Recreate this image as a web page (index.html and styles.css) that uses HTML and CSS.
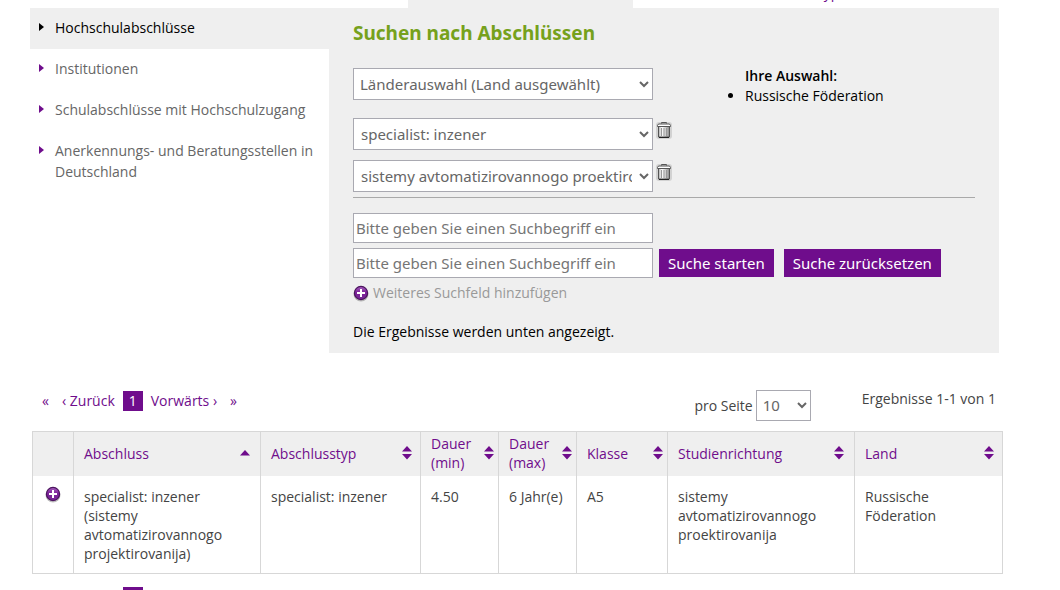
FILE: index.html
```html
<!DOCTYPE html>
<html lang="de">
<head>
<meta charset="utf-8">
<title>Suchen nach Abschlüssen</title>
<link rel="stylesheet" href="styles.css">
</head>
<body>
<svg class="defs" aria-hidden="true">
  <defs>
    <linearGradient id="violet" x1="0" y1="0" x2="0" y2="1"><stop offset="0" stop-color="#a560bd"/><stop offset=".45" stop-color="#7c2299"/><stop offset="1" stop-color="#762895"/></linearGradient>
    <linearGradient id="metal"><stop offset="0" stop-color="#aaa"/><stop offset=".3" stop-color="#fff"/><stop offset=".65" stop-color="#ccc"/><stop offset="1" stop-color="#888"/></linearGradient>
  </defs>
  <symbol id="plus" viewBox="0 0 16 17">
    <ellipse cx="8" cy="9" rx="7.5" ry="7.5" fill="#000" opacity=".25"/>
    <circle cx="8" cy="8" r="6.6" fill="url(#violet)" stroke="#4c145f" stroke-width="1.2"/>
    <path d="M8 4v8M4 8h8" stroke="#fff" stroke-width="2"/>
  </symbol>
  <symbol id="trash" viewBox="0 0 16 20">
    <rect x="0" y="2" width="16" height="17" rx="3" fill="#000" opacity=".12"/>
    <path d="M5.500 3.500V2.500h5v1" fill="none" stroke="#555"/>
    <path d="M2.500 6.500h11v10.500h-11z" fill="url(#metal)" stroke="#555"/>
    <path d="M5.500 8v8M8 8v8M10.500 8v8" stroke="#999"/>
    <path d="M3 17.500h10" stroke="#222"/>
    <path d="M1.500 6.500v-1l1-1.500h11l1 1.500v1z" fill="#fff" stroke="#555"/>
  </symbol>
  <symbol id="sort" viewBox="0 0 10 14">
    <path d="M0 5.500L5 0l5 5.500zM0 8h10L5 13.500z" fill="#6f0d8c"/>
  </symbol>
  <symbol id="sort-up" viewBox="0 0 10 14">
    <path d="M0 9.500L5 4l5 5.500z" fill="#6f0d8c"/>
  </symbol>
</svg>
<header class="tabs">
  <span class="tab-active"></span>
  <a class="tab" href="#">Abschlusstypen</a>
</header>
<main class="page">
  <div class="top">
    <nav class="side">
      <a class="side-link active" href="#">Hochschulabschlüsse</a>
      <a class="side-link" href="#">Institutionen</a>
      <a class="side-link" href="#">Schulabschlüsse mit Hochschulzugang</a>
      <a class="side-link" href="#">Anerkennungs- und Beratungsstellen in Deutschland</a>
    </nav>
    <form class="panel">
      <h1 class="title">Suchen nach Abschlüssen</h1>
      <div class="choice">
        <select class="field select country" aria-label="Länderauswahl"><option>Länderauswahl (Land ausgewählt)</option></select>
        <div class="selection">
          <strong>Ihre Auswahl:</strong>
          <ul class="countries"><li>Russische Föderation</li></ul>
        </div>
      </div>
      <div class="filters">
        <div class="line">
          <select class="field select" aria-label="Abschluss"><option>specialist: inzener</option></select>
          <button class="icon-button" type="button" aria-label="Abschluss entfernen"><svg class="trash"><use href="#trash"/></svg></button>
        </div>
        <div class="line">
          <select class="field select" aria-label="Studienrichtung"><option>sistemy avtomatizirovannogo proektirovanija</option></select>
          <button class="icon-button" type="button" aria-label="Studienrichtung entfernen"><svg class="trash"><use href="#trash"/></svg></button>
        </div>
      </div>
      <div class="terms">
        <input class="field text" type="text" aria-label="Suchbegriff 1" placeholder="Bitte geben Sie einen Suchbegriff ein">
        <div class="actions">
          <input class="field text" type="text" aria-label="Suchbegriff 2" placeholder="Bitte geben Sie einen Suchbegriff ein">
          <button class="button" type="button">Suche starten</button>
          <button class="button" type="button">Suche zurücksetzen</button>
        </div>
      </div>
      <a class="more" href="#"><svg class="plus"><use href="#plus"/></svg>Weiteres Suchfeld hinzufügen</a>
      <p class="note">Die Ergebnisse werden unten angezeigt.</p>
    </form>
  </div>
  <section class="results">
    <div class="bar">
      <nav class="pager">
        <a class="first" href="#">«</a><a class="back" href="#">‹ Zurück</a><a class="current" href="#">1</a><a class="next" href="#">Vorwärts ›</a><a class="last" href="#">»</a>
      </nav>
      <label class="per-page">pro Seite <select class="field count"><option>10</option></select></label>
      <span class="total">Ergebnisse 1-1 von 1</span>
    </div>
    <table class="table">
      <colgroup><col class="c-icon"><col class="c-wide"><col class="c-type"><col class="c-time"><col class="c-time"><col class="c-class"><col class="c-wide"><col></colgroup>
      <thead>
        <tr>
          <th></th>
          <th><a class="head" href="#">Abschluss<svg class="sort"><use href="#sort-up"/></svg></a></th>
          <th><a class="head" href="#">Abschlusstyp<svg class="sort"><use href="#sort"/></svg></a></th>
          <th><a class="head" href="#">Dauer (min)<svg class="sort"><use href="#sort"/></svg></a></th>
          <th><a class="head" href="#">Dauer (max)<svg class="sort"><use href="#sort"/></svg></a></th>
          <th><a class="head" href="#">Klasse<svg class="sort"><use href="#sort"/></svg></a></th>
          <th><a class="head" href="#">Studienrichtung<svg class="sort"><use href="#sort"/></svg></a></th>
          <th><a class="head" href="#">Land<svg class="sort"><use href="#sort"/></svg></a></th>
        </tr>
      </thead>
      <tbody>
        <tr>
          <td class="expand"><button class="icon-button" type="button" aria-label="Details anzeigen"><svg class="plus"><use href="#plus"/></svg></button></td>
          <td>specialist: inzener (sistemy avtomatizirovannogo projektirovanija)</td>
          <td>specialist: inzener</td>
          <td>4.50</td>
          <td class="nowrap">6 Jahr(e)</td>
          <td>A5</td>
          <td>sistemy avtomatizirovannogo proektirovanija</td>
          <td>Russische Föderation</td>
        </tr>
      </tbody>
    </table>
    <div class="bar bottom">
      <nav class="pager">
        <a class="current" href="#">1</a>
      </nav>
    </div>
  </section>
</main>
</body>
</html>
```
FILE: styles.css
```css
* { box-sizing: border-box; }
html { scrollbar-width: none; }
body { margin: 0; background: #fff; color: #444; font: 14px/19px "Open Sans", sans-serif; }
a { color: #6f0d8c; text-decoration: none; }
.defs { position: absolute; width: 0; height: 0; }
.tabs { display: flex; align-items: flex-end; height: 8px; padding-left: 408px; overflow: hidden; }
.tab-active { width: 225px; height: 8px; background: #efefef; }
.tab { margin-left: 121px; padding-bottom: 6px; }
.page { padding: 0 57px 0 30px; }
.top { display: grid; grid-template-columns: 299px 1fr; margin-right: 4px; }
.side { display: flex; flex-direction: column; line-height: 21px; }
.side-link { position: relative; padding: 9px 10px 11px 25px; color: #666; }
.side-link::before { content: ""; position: absolute; left: 9px; top: 15px; border: solid transparent; border-width: 4px 0 4px 5px; border-left-color: #6f0d8c; }
.side-link.active { background: #efefef; color: #000; }
.side-link.active::before { border-left-color: #000; }
.panel { padding: 12px 24px 11px; background: #efefef; color: #000; }
.title { margin: 0 0 22px; color: #76a11c; font: bold 19px/26px "Noto Sans", sans-serif; }
.field { width: 300px; border: 1px solid #a9a9b1; border-radius: 0; background: #fff; color: #666; font: 15px/20px "Noto Sans", sans-serif; }
.select { height: 32px; padding: 0 4px 1px 3px; }
.country { padding-left: 2px; }
.choice { display: flex; gap: 92px; height: 50px; }
.selection { margin-top: -2px; line-height: 20px; }
.selection strong { font-weight: 600; }
.countries { margin: 0; padding: 0; }
.filters { display: flex; flex-direction: column; gap: 10px; padding-bottom: 5px; border-bottom: 1px solid #a9a9a9; }
.line { display: flex; align-items: flex-start; gap: 3px; }
.icon-button { display: block; padding: 0; border: 0; background: none; }
.trash { display: block; width: 16px; height: 20px; margin: 2px 0; }
.plus { flex: none; display: block; width: 16px; height: 17px; }
.terms { display: flex; flex-direction: column; gap: 5px; margin-top: 15px; }
.text { height: 30px; padding: 0 2px 1px; }
.text::placeholder { color: #757575; }
.actions { display: flex; align-items: center; }
.button { height: 28px; margin-left: 6px; padding: 0 9px 1px; border: 0; background: #6f0d8c; color: #fff; font: 15px/20px "Noto Sans", sans-serif; }
.button + .button { margin-left: 10px; }
.more { display: flex; align-items: center; gap: 4px; margin-top: 5px; color: #999; line-height: 20px; }
.note { margin: 19px 0 0; line-height: 20px; }
.results { padding: 37px 0 0 2px; }
.bar { display: flex; height: 41px; padding-right: 7px; }
.pager { display: flex; flex: 1; height: 20px; margin-top: 1px; padding-left: 10px; line-height: 20px; }
.back { margin-left: 13px; }
.current { width: 20px; margin: 0 8px; background: #6f0d8c; color: #fff; text-align: center; }
.last { margin-left: 13px; }
.bottom { height: 16px; overflow: hidden; }
.bottom .pager { margin-top: 13px; padding-left: 83px; line-height: 30px; }
.per-page { display: flex; align-items: center; gap: 3px; height: 31px; padding-bottom: 1px; }
.count { width: 55px; height: 31px; padding: 0 4px 1px 2px; }
.total { margin-left: 51px; line-height: 18px; }
.table { width: 100%; border-collapse: collapse; table-layout: fixed; }
.c-icon { width: 41px; }
.c-wide { width: 187px; }
.c-type { width: 160px; }
.c-time { width: 78px; }
.c-class { width: 91px; }
.table th, .table td { border: 1px solid #d7d7d7; text-align: left; vertical-align: top; font-weight: 400; }
.table th { height: 44px; padding: 2px 8px 3px 10px; border-bottom: 0; background: #efefef; vertical-align: middle; }
.table td { padding: 11px 10px 10px; border-top: 0; }
.table th:nth-child(2), .table th:nth-child(7) { padding-right: 10px; }
.table th:nth-child(4), .table th:nth-child(5), .table th:nth-child(6) { padding-right: 4px; }
.head { display: flex; align-items: center; justify-content: space-between; }
.sort { flex: none; width: 10px; height: 14px; }
.table .expand { padding: 10px 12px; }
.nowrap { white-space: nowrap; }
```
